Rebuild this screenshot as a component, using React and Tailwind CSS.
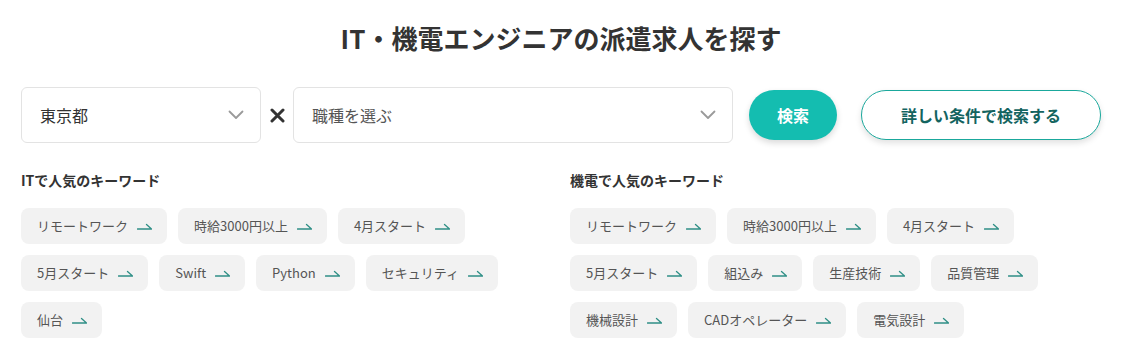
import React from 'react';

const itKeywords = ['リモートワーク', '時給3000円以上', '4月スタート', '5月スタート', 'Swift', 'Python', 'セキュリティ', '仙台'];
const kidenKeywords = ['リモートワーク', '時給3000円以上', '4月スタート', '5月スタート', '組込み', '生産技術', '品質管理', '機械設計', 'CADオペレーター', '電気設計'];

// 右端に返しのついた矢印
const Harpoon = () => (
  <svg width="15" height="8" viewBox="0 0 15 8" fill="none" className="shrink-0">
    <path d="M0.5 7H14.5L9.5 2.5" stroke="#2f8f86" strokeWidth="1.3" strokeLinecap="round" strokeLinejoin="round" />
  </svg>
);

const Chevron = () => (
  <svg width="16" height="10" viewBox="0 0 16 10" fill="none">
    <path d="M1.5 1.5L8 8L14.5 1.5" stroke="#9a9a9a" strokeWidth="1.8" strokeLinecap="round" strokeLinejoin="round" />
  </svg>
);

const KeywordList = ({ title, items }) => (
  <div>
    <h3 className="text-[14px] font-bold text-[#333] leading-none mt-[1px]">{title}</h3>
    <div className="flex flex-wrap gap-x-[11px] gap-y-[11px] mt-[21px]">
      {items.map((item, i) => (
        <a
          key={i}
          href="#"
          className="h-[36px] pl-4 pr-[15px] flex items-center gap-[9px] bg-[#f2f2f2] rounded-lg text-[13px] text-[#555]"
        >
          <span>{item}</span>
          <Harpoon />
        </a>
      ))}
    </div>
  </div>
);

export default function App() {
  return (
    <div className="bg-white min-h-screen font-['Noto_Sans_CJK_JP','Noto_Sans',sans-serif]">
      <div className="w-[1080px] ml-[21px] pt-[18px]">
        <h2 className="text-[26px] font-bold text-[#333] text-center leading-[40px]">
          IT・機電エンジニアの派遣求人を探す
        </h2>

        <div className="flex items-center mt-[29px]">
          <div className="w-[240px] h-[56px] border border-[#e3e3e3] rounded-md flex items-center justify-between pl-[18px] pr-[16px] text-[16px] text-[#333]">
            <span>東京都</span>
            <Chevron />
          </div>
          <div className="w-[32px] flex justify-center">
            <svg width="15" height="15" viewBox="0 0 15 15">
              <path d="M2 2L13 13M13 2L2 13" stroke="#333" strokeWidth="3" strokeLinecap="round" />
            </svg>
          </div>
          <div className="w-[440px] h-[56px] border border-[#e3e3e3] rounded-md flex items-center justify-between pl-[18px] pr-[16px] text-[16px] text-[#555]">
            <span>職種を選ぶ</span>
            <Chevron />
          </div>
          <button className="ml-4 w-[88px] h-[50px] rounded-full bg-[#14bdb0] text-white font-bold text-[16px] shadow-[0_3px_6px_rgba(0,0,0,0.15)]">
            検索
          </button>
          <button className="ml-6 w-[240px] h-[50px] rounded-full border border-[#1aa89c] bg-white text-[#13645f] font-bold text-[16px] shadow-[0_3px_6px_rgba(0,0,0,0.12)]">
            詳しい条件で検索する
          </button>
        </div>

        <div className="grid grid-cols-2 gap-x-[18px] mt-[29px]">
          <KeywordList title="ITで人気のキーワード" items={itKeywords} />
          <KeywordList title="機電で人気のキーワード" items={kidenKeywords} />
        </div>
      </div>
    </div>
  );
}
